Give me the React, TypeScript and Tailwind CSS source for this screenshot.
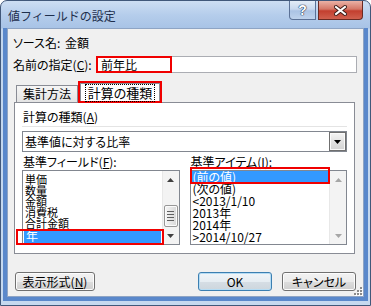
import React from "react";

const LEFT_ITEMS = ["単価", "数量", "金額", "消費税", "合計金額"];
const RIGHT_ITEMS = ["(次の値)", "<2013/1/10", "2013年", "2014年", ">2014/10/27"];

// ニーモニックの下線文字
function Mn({ c }: { c: string }) {
	return <span className="underline decoration-1 underline-offset-[1px]">{c}</span>;
}

function Arrow({ up, color }: { up?: boolean; color: string }) {
	return (
		<svg width="7" height="4" viewBox="0 0 7 4">
			<path d={up ? "M0 4 L3.5 0 L7 4 Z" : "M0 0 L7 0 L3.5 4 Z"} fill={color} />
		</svg>
	);
}

function ScrollBar({ enabled }: { enabled: boolean }) {
	const color = enabled ? "#404040" : "#a6a6a6";
	return (
		<div className="flex w-[17px] shrink-0 flex-col border-l border-[#e8e8e8] bg-[#f3f3f3]">
			<div className="flex h-[17px] items-center justify-center">
				<Arrow up color={color} />
			</div>
			<div className="flex flex-1 flex-col justify-end">
				{enabled && (
					<div className="mx-[1px] flex h-[22px] flex-col items-center justify-center gap-[2px] rounded-[2px] border border-[#979797] bg-[linear-gradient(to_right,#f6f6f6,#e6e6e6_50%,#d8d8d8)] shadow-[inset_0_0_0_1px_#fbfbfb]">
						<div className="h-px w-[7px] bg-[#606060]" />
						<div className="h-px w-[7px] bg-[#606060]" />
						<div className="h-px w-[7px] bg-[#606060]" />
						<div className="h-px w-[7px] bg-[#606060]" />
					</div>
				)}
			</div>
			<div className="flex h-[17px] items-center justify-center">
				<Arrow color={color} />
			</div>
		</div>
	);
}

function Btn({ children, w, primary }: { children: React.ReactNode; w: string; primary?: boolean }) {
	return (
		<div
			className={`flex h-[19px] items-center justify-center rounded-[3px] border leading-[14px] ${w} ${
				primary
					? "border-[#3c7fb1] bg-[linear-gradient(to_bottom,#f0f5f9,#e6edf2_50%,#d6dee5_50%,#cdd6dd)] shadow-[inset_0_0_0_1px_#b5dcf4]"
					: "border-[#707070] bg-[linear-gradient(to_bottom,#f2f2f2,#ebebeb_50%,#dddddd_50%,#cfcfcf)] shadow-[inset_0_0_0_1px_#fcfcfc]"
			}`}
		>
			{children}
		</div>
	);
}

function TitleBar() {
	return (
		<div className="flex h-[27px] shrink-0 items-start justify-between">
			<div className="ml-[7px] mt-[8px] text-[12px] leading-[14px] text-[#1e2f4d] [font-feature-settings:normal]">
				値フィールドの設定
			</div>
			<div className="mr-[7px] flex gap-[2px]">
				<div className="flex h-[19px] w-[27px] items-center justify-center rounded-bl-[4px] border border-t-0 border-[#5b7196] bg-[linear-gradient(to_bottom,#e3ecf7,#c8d8ee_45%,#abc3e4_55%,#bed2ec)] font-['Liberation_Sans',sans-serif] text-[14px] font-bold text-white [text-shadow:0_0_1px_#1b2e4d,0_0_1px_#1b2e4d,0_0_1px_#1b2e4d]">
					?
				</div>
				<div className="flex h-[19px] w-[45px] items-center justify-center rounded-br-[4px] border border-t-0 border-[#6a2a22] bg-[linear-gradient(to_bottom,#ebb2a6,#d57767_45%,#c33f2f_55%,#d0604e)]">
					<svg width="13" height="11" viewBox="0 0 13 11">
						<path d="M2 2 L11 9 M11 2 L2 9" stroke="#3d1a15" strokeWidth="4" strokeLinecap="square" />
						<path d="M2 2 L11 9 M11 2 L2 9" stroke="#ffffff" strokeWidth="2" strokeLinecap="square" />
					</svg>
				</div>
			</div>
		</div>
	);
}

export default function App() {
	return (
		<div className="h-[306px] w-[371px] bg-white font-['Noto_Sans_CJK_JP',sans-serif] text-[12px] leading-[14px] text-black">
			<div className="flex h-full flex-col rounded-t-[7px] border border-[#41587a] bg-[linear-gradient(to_bottom,#cddef2_0px,#b5cdeb_14px,#a8c3e6_27px,#c2d6ee_28px,#c6d9ef_100%)]">
				<TitleBar />
				<div className="mx-[2px] mb-[4px] flex flex-1 flex-col border-x-4 border-b-4 border-[#5a88cb]">
					{/* クライアント領域 */}
					<div className="relative flex flex-1 flex-col border border-[#8ea4c4] bg-[#f0f0f0] [font-feature-settings:'palt']">
						<div className="flex pl-[5px] pt-[7px]">
							<span className="w-[52px] whitespace-nowrap">ソース名:</span>
							<span>金額</span>
						</div>

						<div className="mt-[6px] flex items-center pl-[5px]">
							<span className="w-[83px] whitespace-nowrap">
								名前の指定(<Mn c="C" />):
							</span>
							<div className="flex h-[17px] w-[261px] border border-[#abadb3] bg-white">
								<span className="-my-px -ml-px flex h-[17px] w-[76px] items-center border-2 border-[#f00000] pl-[3px]">
									前年比
								</span>
							</div>
						</div>

						{/* タブ */}
						<div className="relative z-10 -mb-px mt-[8px] flex h-[22px] items-end pl-[8px]">
							<div className="mb-px flex h-[17px] w-[62px] items-center justify-center border-x border-t border-[#898c95] bg-[linear-gradient(to_bottom,#f5f5f5,#e4e4e4)]">
								集計方法
							</div>
							<div className="h-[22px] w-[84px] border-2 border-[#f00000]">
								<div className="flex h-full items-center justify-center border-x border-t border-[#898c95] bg-white pt-px">
									<span className="px-[2px] py-px text-[13px] outline-1 outline-dotted outline-black">計算の種類</span>
								</div>
							</div>
						</div>

						<div className="ml-[6px] flex h-[152px] w-[341px] flex-col border border-[#898c95] bg-white px-[7px] pt-[7px]">
							<div className="pl-px">
								計算の種類(<Mn c="A" />)
							</div>
							<div className="mt-[2px] h-px bg-[#e4e4e4]" />
							<div className="mt-[4px] flex h-[21px] items-center border border-[#828790] bg-white">
								<span className="pl-[2px]">基準値に対する比率</span>
								<div className="ml-auto flex h-[19px] w-[17px] items-center justify-center border border-[#6f6f6f] bg-[linear-gradient(to_bottom,#f4f4f4,#e2e2e2_50%,#d3d3d3)] shadow-[inset_0_0_0_1px_#fafafa]">
									<Arrow color="#000000" />
								</div>
							</div>

							<div className="mt-[3px] grid grid-cols-2 gap-x-[10px]">
								<div className="pl-px">
									基準フィールド(<Mn c="F" />):
								</div>
								<div className="pl-px">
									基準アイテム(<Mn c="I" />):
								</div>
								<div className="relative mt-px flex h-[75px] border border-[#828790] bg-white">
									<div className="flex-1 overflow-hidden px-px pt-[3px] text-[11px]">
										{LEFT_ITEMS.map((t) => (
											<div key={t} className="h-[11px] pl-px leading-[11px]">
												{t}
											</div>
										))}
										<div className="h-[14px] bg-[#3399ff] pl-[2px] text-[12px] leading-[14px] text-white">年</div>
									</div>
									<ScrollBar enabled />
									<div className="absolute left-[-7px] top-[58px] h-[16px] w-[148px] border-2 border-[#f00000]" />
								</div>
								<div className="relative mt-px flex h-[75px] border border-[#828790] bg-white">
									<div className="flex-1 overflow-hidden px-px">
										<div className="h-[12px] bg-[#3399ff] pl-px leading-[12px] text-white">(前の値)</div>
										{RIGHT_ITEMS.map((t) => (
											<div key={t} className="h-[12px] pl-px leading-[12px]">
												{t}
											</div>
										))}
									</div>
									<ScrollBar enabled={false} />
									<div className="absolute left-[-1px] top-[-4px] h-[17px] w-[140px] border-2 border-[#f00000]" />
								</div>
							</div>
						</div>

						<div className="mt-[18px] flex items-center pl-[7px] pr-[7px]">
							<Btn w="w-[80px]">
								表示形式(<Mn c="N" />)
							</Btn>
							<div className="ml-auto flex gap-[10px]">
								<Btn w="w-[74px]" primary>
									OK
								</Btn>
								<Btn w="w-[74px]">キャンセル</Btn>
							</div>
						</div>

						{/* サイズ変更グリップ */}
						<svg className="absolute bottom-0 right-0" width="11" height="11" viewBox="0 0 11 11">
							{[
								[8, 2],
								[8, 5],
								[5, 5],
								[8, 8],
								[5, 8],
								[2, 8],
							].map(([x, y]) => (
								<g key={`${x}-${y}`}>
									<rect x={x + 1} y={y + 1} width="2" height="2" fill="#ffffff" />
									<rect x={x} y={y} width="2" height="2" fill="#8a8a8a" />
								</g>
							))}
						</svg>
					</div>
				</div>
			</div>
		</div>
	);
}
